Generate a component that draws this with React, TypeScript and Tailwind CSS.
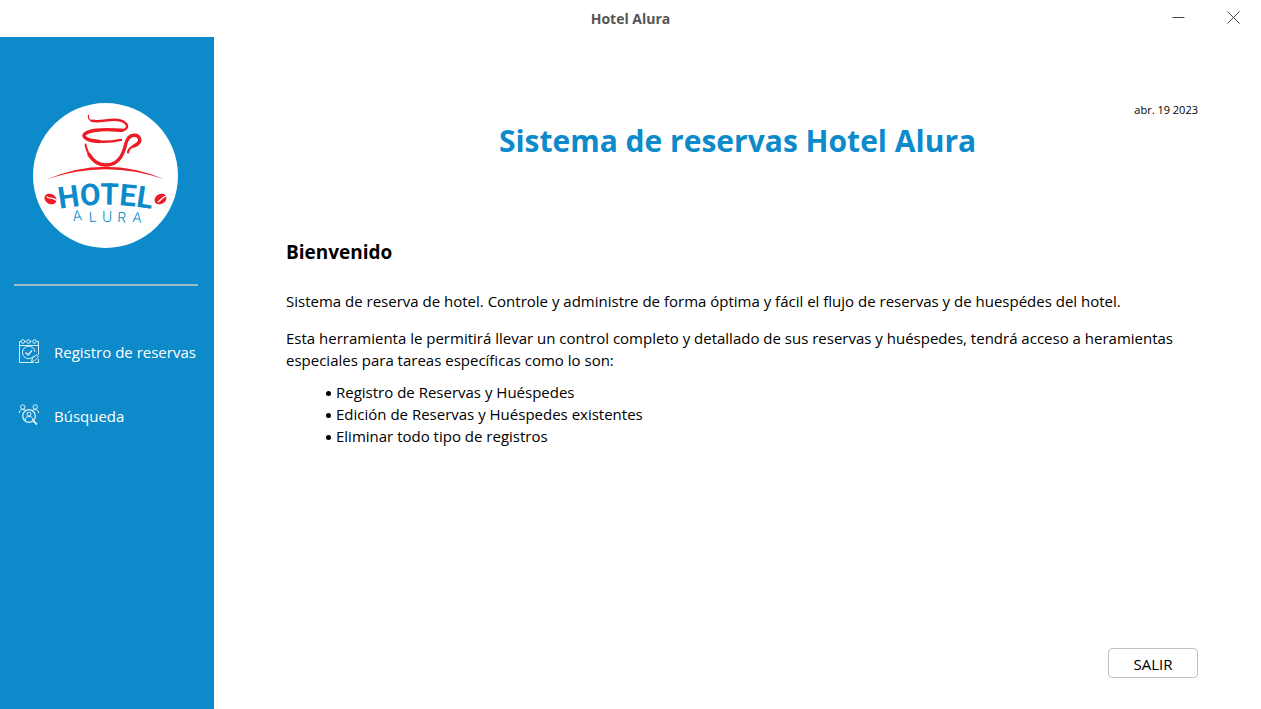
import React from "react";

function HotelLogo() {
  return (
    <svg viewBox="0 0 146 146" className="size-[146px]" role="img" aria-label="Hotel Alura">
      <circle cx="72.5" cy="72.5" r="72.5" fill="#fff" />
      <g fill="none" stroke="#ed1c24" strokeLinecap="round" strokeLinejoin="round">
        <path strokeWidth="1.3" d="M55.500 12.500C54.500 17 59 19 65 18.300" />
        <path
          strokeWidth="2.4"
          d="M59 17.800C68 19.600 76 15.600 85 17C92 18 95.500 22 93.500 25C91.500 28.500 86 27.700 80 26.800"
        />
        <path
          strokeWidth="3.4"
          d="M89 27.300C80 26.600 72 25.900 63 27.300C54 28.500 50 31 51.200 33.500C52.500 36.500 58 37.800 66 38.500"
        />
        <path strokeWidth="2.5" d="M58 37.500C68 39.800 78 39 88 36.900" />
        <path strokeWidth="2" d="M52.500 41.500C53.500 47 56 52 59 55.500" />
        <path
          strokeWidth="3.4"
          d="M56 51.500C60 58 66 62 72.500 62C82 62 88 56 91 47C92.800 42 92.500 38.500 95.500 35C99 31.300 105 31.300 106.500 35.500C107.800 39 104.500 41.500 101 43"
        />
        <path strokeWidth="2.2" d="M103 42C98.500 43.500 95.500 45.500 95 49.500" />
      </g>
      <path fill="#ed1c24" d="M13.500 76.600Q72.500 51 132 76.600Q72.500 56 13.500 76.600Z" />
      <g transform="rotate(28 17.500 96)">
        <ellipse cx="17.500" cy="96" rx="6.300" ry="5" fill="#ed1c24" />
        <path d="M13 95.500C16 97.500 18 93 24 94.500" fill="none" stroke="#fff" strokeWidth="1.300" />
      </g>
      <g transform="rotate(-30 127.500 96)">
        <ellipse cx="127.500" cy="96" rx="6.300" ry="5" fill="#ed1c24" />
        <path d="M123.500 97C126 98.500 129 94.500 134 96.500" fill="none" stroke="#fff" strokeWidth="1.300" />
      </g>
      <path id="hotel-baseline" d="M24 106.500Q72.500 97 121 106.500" fill="none" />
      <text fill="#0c8ac9" textAnchor="middle" className="font-['Roboto',sans-serif] text-[30px] font-bold">
        <textPath href="#hotel-baseline" startOffset="50%">
          HOTEL
        </textPath>
      </text>
      <text
        x="40 56 69 84 99"
        y="118 119 119 119 119"
        rotate="-5 -3 0 3 5"
        fill="#0c8ac9"
        className="font-['Inter',sans-serif] text-[14px] font-light"
      >
        ALURA
      </text>
    </svg>
  );
}

function CalendarIcon() {
  return (
    <svg viewBox="0 0 20 28" className="h-7 w-5" fill="none" stroke="#fff" strokeOpacity="0.85" aria-hidden="true">
      <path d="M2 3.500H.5V24.500H14.500M19.500 17V3.500H18M.5 7.500H19.500M5.500 3.500H7M11 3.500H12.500" />
      <circle cx="3.800" cy="3.500" r="1.800" />
      <circle cx="9.500" cy="3.500" r="1.800" />
      <circle cx="15.500" cy="3.500" r="1.800" />
      <path d="M15.200 17.500A6.300 6.300 0 1 1 16 14" />
      <path strokeWidth="1.500" d="M6.500 14.500L9 17L13 12.500" />
      <path d="M12.500 23.500L13.500 20L17.500 16.800L19.500 19L15.500 22.800ZM16 24.500H19.500V21" />
    </svg>
  );
}

function SearchPeopleIcon() {
  return (
    <svg viewBox="0 0 20 24" className="h-6 w-5" fill="none" stroke="#fff" strokeOpacity="0.85" aria-hidden="true">
      <circle cx="3.800" cy="3" r="2.200" />
      <circle cx="16.200" cy="3" r="2.200" />
      <path d="M.5 9V8C.5 6.500 2 5.500 3.800 5.500C5 5.500 6 6 6.600 6.600M19.500 9V8C19.500 6.500 18 5.500 16.200 5.500C15 5.500 14 6 13.400 6.600" />
      <circle cx="10" cy="12" r="6.300" strokeWidth="1.300" />
      <circle cx="10" cy="10" r="2" />
      <path d="M6.500 16V14.800C6.500 13.300 8 12.500 10 12.500C12 12.500 13.500 13.300 13.500 14.800V16" />
      <path strokeWidth="2" d="M14.500 17L18 20.500" />
    </svg>
  );
}

function NavItem({ icon, label }: { icon: React.ReactNode; label: string }) {
  return (
    <a href="#" className="flex h-16 items-center gap-[15px] pl-[19px] text-[15px] whitespace-nowrap text-white">
      {icon}
      {label}
    </a>
  );
}

const features = [
  "Registro de Reservas y Huéspedes",
  "Edición de Reservas y Huéspedes existentes",
  "Eliminar todo tipo de registros",
];

export default function App() {
  return (
    <div className="flex min-h-screen flex-col bg-white font-['Open_Sans','Noto_Sans',sans-serif] text-black">
      <header className="grid h-[37px] grid-cols-[1fr_auto_1fr] items-center">
        <span className="col-start-2 text-[14px] font-bold text-[#555]">Hotel Alura</span>
        <div className="flex justify-end self-start text-[#444]">
          <button type="button" aria-label="Minimizar" className="flex h-[34px] w-[55px] items-center justify-center">
            <svg viewBox="0 0 13 13" className="size-[13px]" stroke="currentColor">
              <path d="M.5 6.500H12.500" />
            </svg>
          </button>
          <button type="button" aria-label="Cerrar" className="flex h-[34px] w-[55px] items-center justify-center">
            <svg viewBox="0 0 13 13" className="size-[13px]" stroke="currentColor">
              <path d="M.5 .5L12.500 12.500M12.500 .5L.5 12.500" />
            </svg>
          </button>
        </div>
      </header>
      <div className="flex flex-1">
        <aside className="w-[214px] shrink-0 bg-[#0c8ac9] pt-[66px]">
          <div className="pl-[33px]">
            <HotelLogo />
          </div>
          <hr className="mt-[35px] mr-4 ml-[14px] border-0 border-t-2 border-[#9fb8c9]" />
          <nav className="mt-[34px]" aria-label="Principal">
            <NavItem icon={<CalendarIcon />} label="Registro de reservas" />
            <NavItem icon={<SearchPeopleIcon />} label="Búsqueda" />
          </nav>
        </aside>
        <main className="flex flex-1 flex-col pt-16 pb-[31px]">
          <time dateTime="2023-04-19" className="pr-[63px] text-right text-[11px] leading-[18px]">
            abr. 19 2023
          </time>
          <h1 className="text-center text-[30px] leading-[44px] font-bold text-[#0c8ac9]">
            Sistema de reservas Hotel Alura
          </h1>
          <section className="mt-[76px] pr-[63px] pl-[72px] text-[15px] leading-[22px]">
            <h2 className="text-[19px] leading-[26px] font-bold">Bienvenido</h2>
            <p className="mt-[25px]">
              Sistema de reserva de hotel. Controle y administre de forma óptima y fácil el flujo de reservas y de
              huespédes del hotel.
            </p>
            <p className="mt-[15px]">
              Esta herramienta le permitirá llevar un control completo y detallado de sus reservas y huéspedes, tendrá
              acceso a heramientas especiales para tareas específicas como lo son:
            </p>
            <ul className="mt-[10px] pl-10">
              {features.map((feature) => (
                <li
                  key={feature}
                  className="flex items-center gap-[5px] before:mt-[3px] before:size-[5px] before:rounded-full before:bg-black"
                >
                  {feature}
                </li>
              ))}
            </ul>
          </section>
          <div className="mt-auto flex justify-end pr-[63px]">
            <button
              type="button"
              className="h-[30px] w-[90px] rounded-[4px] border border-[#c0c0c0] bg-white pt-px text-[15px] leading-[28px]"
            >
              SALIR
            </button>
          </div>
        </main>
      </div>
    </div>
  );
}
